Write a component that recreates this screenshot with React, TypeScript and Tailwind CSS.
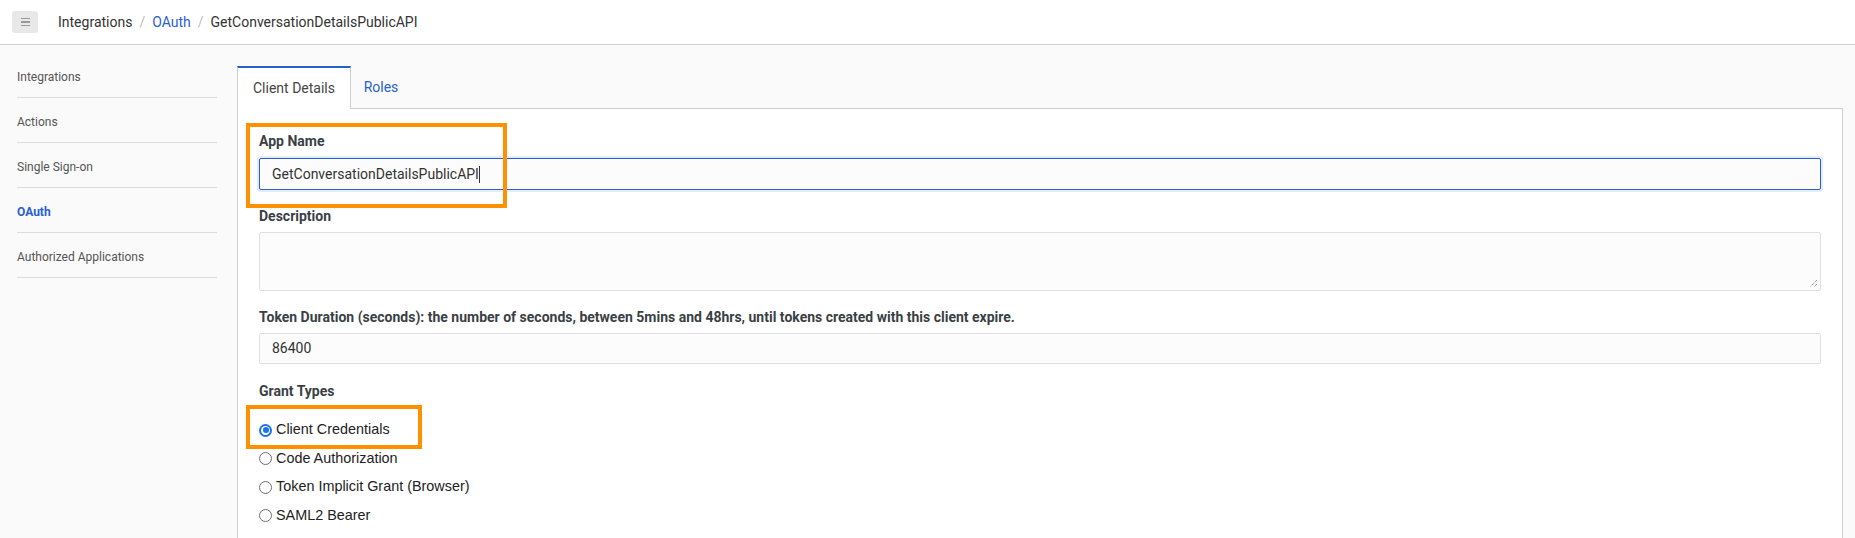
import { useState } from 'react'

const sideItems = ['Integrations', 'Actions', 'Single Sign-on', 'OAuth', 'Authorized Applications']
const grants = ['Client Credentials', 'Code Authorization', 'Token Implicit Grant (Browser)', 'SAML2 Bearer']

function Radio({ checked }: { checked: boolean }) {
  return checked ? (
    <span className="w-[13px] h-[13px] rounded-full bg-[#1a73e8] flex items-center justify-center shrink-0">
      <span className="w-[9px] h-[9px] rounded-full bg-white flex items-center justify-center">
        <span className="w-[6px] h-[6px] rounded-full bg-[#1a73e8]" />
      </span>
    </span>
  ) : (
    <span className="w-[13px] h-[13px] rounded-full border border-[#6f6f6f] bg-white shrink-0" />
  )
}

export default function App() {
  const [grant, setGrant] = useState(0)

  return (
    <div className="w-[1855px] h-[538px] overflow-hidden bg-[#fafafa] text-[#333] font-['Roboto',sans-serif]">
      {/* Header */}
      <div className="h-[45px] bg-white border-b border-[#cfcfcf] flex items-center">
        <button className="ml-3 w-[26px] h-[22px] rounded-[3px] bg-[#e8e8e8] flex flex-col items-center justify-center gap-[2px]">
          <span className="w-[9px] h-[1.5px] bg-[#9a9a9a]" />
          <span className="w-[9px] h-[1.5px] bg-[#9a9a9a]" />
          <span className="w-[9px] h-[1.5px] bg-[#9a9a9a]" />
        </button>
        <div className="ml-5 flex items-center text-[14px] text-[#333]">
          <span>Integrations</span>
          <span className="mx-[7px] text-[#bbb]">/</span>
          <span className="text-[#2a5fd0]">OAuth</span>
          <span className="mx-[7px] text-[#bbb]">/</span>
          <span>GetConversationDetailsPublicAPI</span>
        </div>
      </div>

      <div className="flex">
        {/* Sidebar */}
        <div className="w-[237px] shrink-0 pl-[17px] pr-[20px] pt-[8px]">
          {sideItems.map(item => (
            <div
              key={item}
              className={`h-[45px] flex items-center pt-[3px] border-b border-[#dcdcdc] text-[12px] ${
                item === 'OAuth' ? 'font-bold text-[#2a5fd0]' : 'text-[#555]'
              }`}
            >
              {item}
            </div>
          ))}
        </div>

        {/* Main */}
        <div className="w-[1606px] pt-[21px]">
          <div className="flex h-[43px]">
            <div className="w-[114px] border-t-2 border-t-[#2a5fd0] border-x border-x-[#cfcfcf] bg-white flex items-center justify-center text-[14px] text-[#444]">
              Client Details
            </div>
            <div className="w-[60px] border-b border-[#cfcfcf] flex items-center justify-center text-[14px] text-[#2a5fd0]">
              Roles
            </div>
            <div className="flex-1 border-b border-[#cfcfcf]" />
          </div>

          <div className="relative bg-white border-x border-[#cfcfcf] h-[430px] px-[21px] pt-[22px]">
            {/* annotation boxes */}
            <div className="absolute left-[8px] top-[14px] w-[261px] h-[85px] border-4 border-[#ff9100]" />
            <div className="absolute left-[8px] top-[296px] w-[176px] h-[44px] border-4 border-[#ff9100]" />

            <div className="mb-4">
              <div className="h-5 leading-5 text-[14px] font-bold text-[#3a3f45] mb-[7px]">App Name</div>
              <div className="h-[32px] rounded-[2px] border border-[#2a5fd0] bg-[#fcfcfc] shadow-[0_0_0_2px_rgba(42,95,208,0.12)] flex items-center pl-[12px] text-[14px] text-[#333]">
                GetConversationDetailsPublicAPI<span className="w-px h-[17px] bg-[#333]" />
              </div>
            </div>

            <div className="mb-4">
              <div className="h-5 leading-5 text-[14px] font-bold text-[#3a3f45] mb-[6px]">Description</div>
              <div className="relative h-[59px] rounded-[2px] border border-[#dde0e4] bg-[#fcfcfc]">
                <svg className="absolute right-[2px] bottom-[2px]" width="9" height="9" viewBox="0 0 9 9">
                  <path d="M8 1L1 8M8 5L5 8" stroke="#777" strokeWidth="1" strokeDasharray="1 1" />
                </svg>
              </div>
            </div>

            <div className="mb-[17px]">
              <div className="h-5 leading-5 text-[14px] font-bold text-[#3a3f45] mb-[6px]">
                Token Duration (seconds): the number of seconds, between 5mins and 48hrs, until tokens created with this client expire.
              </div>
              <div className="h-[31px] rounded-[2px] border border-[#dde0e4] bg-[#fcfcfc] flex items-center pl-[12px] text-[14px] text-[#333]">
                86400
              </div>
            </div>

            <div className="h-5 leading-5 text-[14px] font-bold text-[#3a3f45] mb-[15px]">Grant Types</div>
            <div className="flex flex-col font-['Liberation_Sans',Arial,sans-serif]">
              {grants.map((g, i) => (
                <label key={g} onClick={() => setGrant(i)} className="h-[28.5px] flex items-center gap-[4px] text-[14.4px] text-[#222] cursor-pointer">
                  <Radio checked={grant === i} />
                  <span>{g}</span>
                </label>
              ))}
            </div>
          </div>
        </div>
      </div>
    </div>
  )
}
